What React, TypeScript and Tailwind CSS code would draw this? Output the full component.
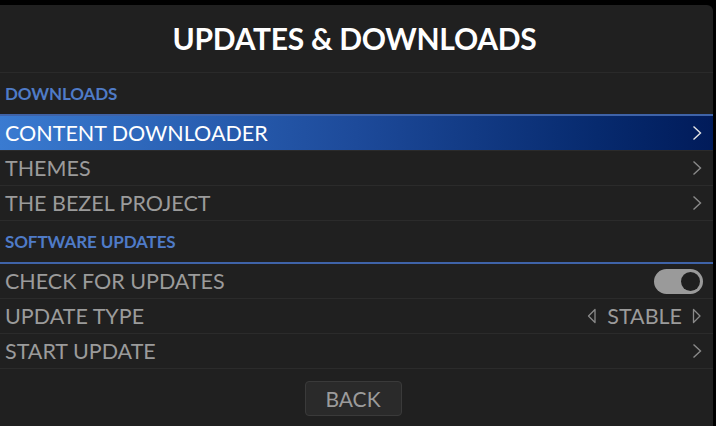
const rowText = "text-[21.5px] text-[#9b9b9b]";

function Chevron({ selected }: { selected?: boolean }) {
  return (
    <svg width="10" height="16" viewBox="0 0 10 16" aria-hidden="true">
      <path d="M1.5 1.5 L8.5 8 L1.5 14.5" fill="none" stroke={selected ? "#e6e6e6" : "#8a8a8a"} strokeWidth="1.4" />
    </svg>
  );
}

function Triangle({ dir }: { dir: "left" | "right" }) {
  const d = dir === "left" ? "M8 1.5 L1.5 8 L8 14.5 Z" : "M1.5 1.5 L8 8 L1.5 14.5 Z";
  return (
    <svg width="10" height="16" viewBox="0 0 10 16" aria-hidden="true">
      <path d={d} fill="none" stroke="#8a8a8a" strokeWidth="1.3" strokeLinejoin="round" />
    </svg>
  );
}

function SectionHeader({ label }: { label: string }) {
  return (
    <div className="flex h-[43px] items-center border-b-2 border-[#3f63a8] px-[5px] pt-[1px]">
      <span className="text-[17px] font-bold tracking-[-0.1px] text-[#4f7bc7]">{label}</span>
    </div>
  );
}

function Row({ label, selected, children }: { label: string; selected?: boolean; children?: React.ReactNode }) {
  return (
    <div
      className={`flex h-[35px] items-center justify-between border-b border-[#2b2b2b] pl-[5px] pr-[11px] ${
        selected ? "bg-gradient-to-r from-[#3a7bd1] via-[#1d4a9a] to-[#011b5a]" : ""
      }`}
    >
      <span className={selected ? "text-[21.5px] text-white" : rowText}>{label}</span>
      {children}
    </div>
  );
}

export default function App() {
  return (
    <div className="h-[426px] w-[716px] bg-black pt-[5px] pr-[3px]" style={{ fontFamily: "Lato, 'Open Sans', sans-serif" }}>
      <div className="flex h-full flex-col rounded-tr-[6px] bg-[#202020]">
        <header className="flex h-[68px] items-center justify-center border-b border-[#2a2a2a] pb-[1px]">
          <h1 className="mr-[4px] text-[30px] font-bold tracking-[-0.3px] text-white">UPDATES &amp; DOWNLOADS</h1>
        </header>

        <SectionHeader label="DOWNLOADS" />
        <Row label="CONTENT DOWNLOADER" selected>
          <Chevron selected />
        </Row>
        <Row label="THEMES">
          <Chevron />
        </Row>
        <Row label="THE BEZEL PROJECT">
          <Chevron />
        </Row>

        <SectionHeader label="SOFTWARE UPDATES" />
        <Row label="CHECK FOR UPDATES">
          <div className="-mr-[1px] flex h-[25px] w-[49px] items-center justify-end rounded-full bg-[#9a9a9a] pr-[3px]">
            <span className="h-[19px] w-[19px] rounded-full bg-[#1f1f1f]" />
          </div>
        </Row>
        <Row label="UPDATE TYPE">
          <div className="flex items-center gap-[10px]">
            <Triangle dir="left" />
            <span className={rowText}>STABLE</span>
            <Triangle dir="right" />
          </div>
        </Row>
        <Row label="START UPDATE">
          <Chevron />
        </Row>

        <div className="flex flex-1 items-start justify-center pt-[12px]">
          <button className="mr-[7px] flex h-[35px] w-[97px] items-center justify-center rounded-[4px] border border-[#3a3a3a] bg-[#2a2a2a] text-[21px] text-[#9b9b9b]">
            BACK
          </button>
        </div>
      </div>
    </div>
  );
}
